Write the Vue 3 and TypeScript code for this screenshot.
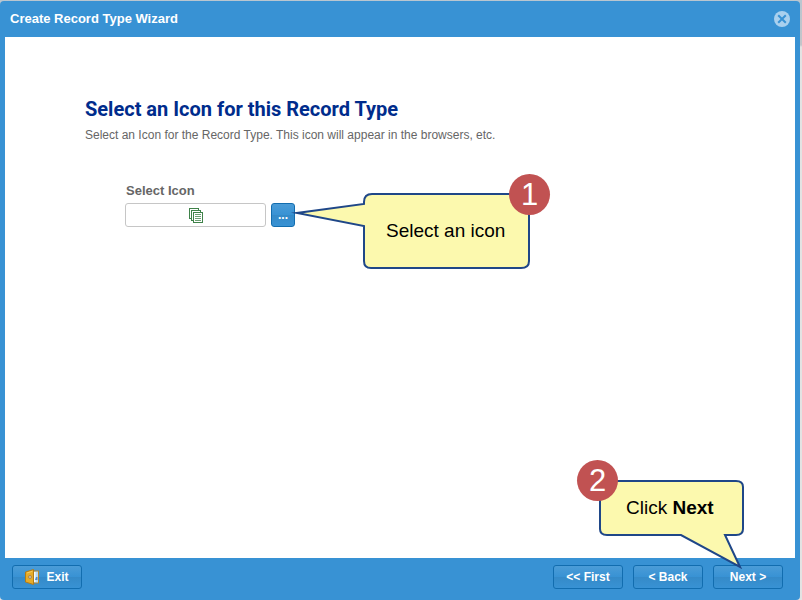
<script setup lang="ts">
import { ref } from 'vue'

const title = 'Create Record Type Wizard'
const iconName = ref('')
</script>

<template>
  <div class="page">
    <section class="wizard" role="dialog" aria-labelledby="wizard-title">
      <header class="titlebar">
        <h1 id="wizard-title" class="titlebar-text">{{ title }}</h1>
        <button type="button" class="close" aria-label="Close">
          <svg viewBox="0 0 16 16" width="16" height="16" aria-hidden="true">
            <circle cx="8" cy="8" r="8" fill="#a9d0ee" />
            <path d="M4.2 4.2 11.8 11.8M11.8 4.2 4.2 11.8" stroke="#3892d4" stroke-width="2" fill="none" />
          </svg>
        </button>
      </header>

      <main class="content">
        <h2 class="heading">Select an Icon for this Record Type</h2>
        <p class="description">Select an Icon for the Record Type. This icon will appear in the browsers, etc.</p>

        <div class="field">
          <label class="field-label" for="record-icon">Select Icon</label>
          <div class="field-row">
            <div class="icon-box">
              <input id="record-icon" v-model="iconName" class="icon-input" type="text" readonly />
              <svg class="icon-preview" viewBox="0 0 14 15" width="14" height="15" aria-hidden="true">
                <g fill="#fff" stroke="#3f8249" stroke-width="1">
                  <rect x="0.5" y="0.5" width="9" height="10" />
                  <rect x="2.5" y="2.5" width="9" height="10" />
                  <rect x="4.5" y="4.5" width="9" height="10" />
                </g>
                <path d="M6 6.5H12M6 8.5H12M6 10.5H12M6 12.5H12" stroke="#6d9f74" />
              </svg>
            </div>
            <div class="anchor">
              <button type="button" class="btn browse" aria-label="Browse icons">...</button>
              <div class="callout callout-icon">
                <svg class="bubble" viewBox="0 0 260 97" width="260" height="97" aria-hidden="true">
                  <path
                    d="M73 30V28Q73 20 81 20H231Q238 20 238 27V87Q238 94 230 94H80Q73 94 73 87V52L6 39Z"
                    fill="#fcf9ae"
                    stroke="#1f4788"
                    stroke-width="2"
                    stroke-miterlimit="10"
                  />
                </svg>
                <span class="callout-text">Select an icon</span>
                <span class="step">1</span>
              </div>
            </div>
          </div>
        </div>
      </main>

      <footer class="toolbar">
        <button type="button" class="btn exit">
          <svg viewBox="0 0 14 16" width="14" height="16" aria-hidden="true">
            <rect x="6.5" y="2" width="7" height="12" fill="#b7d9f4" stroke="#b8862b" />
            <path d="M9.5 3V13" stroke="#f5fbff" stroke-width="2" />
            <path d="M11 8H12.5V11H10Z" fill="#4c89ce" />
            <path d="M0.5 3 8.5 0.5V15.5L0.5 13Z" fill="#e6ac29" stroke="#b27b16" />
            <path d="M2 4 7.5 2.3" stroke="#f5cb60" />
            <circle cx="5" cy="8" r="1.5" fill="#d4c7b4" stroke="#92754a" stroke-width="0.7" />
          </svg>
          <span>Exit</span>
        </button>
        <div class="nav">
          <button type="button" class="btn">&lt;&lt; First</button>
          <button type="button" class="btn">&lt; Back</button>
          <div class="anchor">
            <button type="button" class="btn">Next &gt;</button>
            <div class="callout callout-next">
              <svg class="bubble" viewBox="0 0 168 110" width="168" height="110" aria-hidden="true">
                <path
                  d="M31 21H159Q166 21 166 27V69Q166 75 159 75H148L163 107L104 75H30Q23 75 23 69V28Q23 21 31 21Z"
                  fill="#fcf9ae"
                  stroke="#1f4788"
                  stroke-width="2"
                />
              </svg>
              <span class="callout-text">Click <strong>Next</strong></span>
              <span class="step">2</span>
            </div>
          </div>
        </div>
      </footer>
    </section>
  </div>
</template>

<style>
body {
  margin: 0;
}
</style>

<style scoped>
.page {
  box-sizing: border-box;
  display: flex;
  min-height: 100vh;
  padding: 1px 2px 0 0;
  overflow: hidden;
  background: linear-gradient(#b9c6d0, #c3c5c9 45px, #e3e3e3 47px, #e3e3e3);
  font-family: "Liberation Sans", Arial, sans-serif;
}

.wizard {
  box-sizing: border-box;
  display: flex;
  flex: 1;
  flex-direction: column;
  padding: 0 5px;
  border-radius: 4px;
  background: #3892d4;
}

.titlebar {
  display: flex;
  align-items: center;
  justify-content: space-between;
  height: 36px;
  padding: 0 5px;
}

.titlebar-text {
  margin: 0;
  color: #fff;
  font-size: 13px;
  font-weight: bold;
  line-height: 16px;
}

.close {
  display: flex;
  padding: 0;
  border: 0;
  background: none;
}

.content {
  flex: 1;
  padding: 60px 80px 0;
  background: #fff;
}

.heading {
  margin: 0;
  color: #002c8c;
  font-family: Roboto, "Liberation Sans", sans-serif;
  font-size: 20px;
  font-weight: bold;
  line-height: 24px;
}

.description {
  margin: 6px 0 0;
  color: #666;
  font-size: 12px;
  line-height: 16px;
}

.field {
  margin: 40px 0 0 40px;
}

.field-label {
  display: block;
  padding-left: 1px;
  color: #666;
  font-size: 13px;
  font-weight: bold;
  line-height: 16px;
}

.field-row {
  display: flex;
  gap: 5px;
  margin-top: 4px;
}

.icon-box {
  display: grid;
  place-items: center;
  width: 141px;
}

.icon-input,
.icon-preview {
  grid-area: 1 / 1;
}

.icon-preview {
  pointer-events: none;
}

.icon-input {
  box-sizing: border-box;
  width: 100%;
  height: 24px;
  padding: 0 6px;
  border: 1px solid #c6c6c6;
  border-radius: 3px;
  background: #fff;
}

.anchor {
  position: relative;
  display: flex;
}

.btn {
  box-sizing: border-box;
  display: flex;
  align-items: center;
  justify-content: center;
  width: 70px;
  height: 24px;
  padding: 0;
  border: 1px solid #126daf;
  border-radius: 3px;
  background: linear-gradient(#4b9cd7, #3892d4 50%, #358ac8 51%, #3892d4);
  color: #fff;
  font-family: inherit;
  font-size: 12px;
  font-weight: bold;
  line-height: 16px;
}

.browse {
  width: 24px;
}

.exit {
  gap: 7px;
}

.toolbar {
  box-sizing: border-box;
  display: flex;
  align-items: center;
  justify-content: space-between;
  height: 42px;
  padding: 0 12px 4px 7px;
}

.nav {
  display: flex;
  gap: 10px;
}

/* Help callouts float over the wizard, tied to the button they explain. */
.callout {
  position: absolute;
  color: #000;
}

.callout-icon {
  top: -29px;
  left: 20px;
  width: 260px;
  height: 97px;
}

.callout-next {
  right: 38px;
  bottom: 19px;
  width: 168px;
  height: 110px;
}

.bubble {
  display: block;
  overflow: visible;
}

.callout-text {
  position: absolute;
  font-size: 19px;
  line-height: 22px;
  white-space: nowrap;
}

.callout-icon .callout-text {
  top: 46px;
  left: 95px;
}

.callout-next .callout-text {
  top: 37px;
  left: 49px;
}

.step {
  position: absolute;
  top: 0;
  left: 0;
  width: 41px;
  height: 41px;
  border-radius: 50%;
  background: #c15252;
  color: #fff;
  font-size: 31px;
  line-height: 41px;
  text-align: center;
}

.callout-icon .step {
  left: 218px;
}
</style>
